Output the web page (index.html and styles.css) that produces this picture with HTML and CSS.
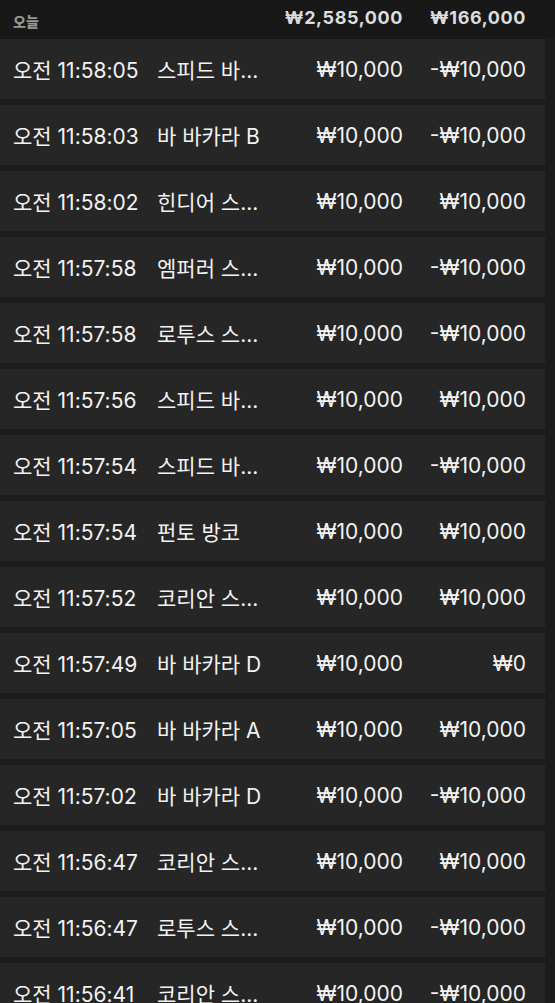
FILE: index.html
```html
<!DOCTYPE html>
<html>
<head>
  <meta charset="utf-8">
  <title>베팅 내역</title>
  <link rel="stylesheet" href="styles.css">
</head>
<body>
  <!-- 오늘 합계 -->
  <div class="summary">
    <span class="day">오늘</span>
    <span></span>
    <span class="total">₩2,585,000</span>
    <span class="total">₩166,000</span>
  </div>

  <!-- 내역 목록 -->
  <div class="list">
    <div class="row"><span>오전 11:58:05</span><span class="name">스피드 바...</span><span class="amt">₩10,000</span><span class="amt">-₩10,000</span></div>
    <div class="row"><span>오전 11:58:03</span><span class="name">바 바카라 B</span><span class="amt">₩10,000</span><span class="amt">-₩10,000</span></div>
    <div class="row"><span>오전 11:58:02</span><span class="name">힌디어 스...</span><span class="amt">₩10,000</span><span class="amt">₩10,000</span></div>
    <div class="row"><span>오전 11:57:58</span><span class="name">엠퍼러 스...</span><span class="amt">₩10,000</span><span class="amt">-₩10,000</span></div>
    <div class="row"><span>오전 11:57:58</span><span class="name">로투스 스...</span><span class="amt">₩10,000</span><span class="amt">-₩10,000</span></div>
    <div class="row"><span>오전 11:57:56</span><span class="name">스피드 바...</span><span class="amt">₩10,000</span><span class="amt">₩10,000</span></div>
    <div class="row"><span>오전 11:57:54</span><span class="name">스피드 바...</span><span class="amt">₩10,000</span><span class="amt">-₩10,000</span></div>
    <div class="row"><span>오전 11:57:54</span><span class="name">펀토 방코</span><span class="amt">₩10,000</span><span class="amt">₩10,000</span></div>
    <div class="row"><span>오전 11:57:52</span><span class="name">코리안 스...</span><span class="amt">₩10,000</span><span class="amt">₩10,000</span></div>
    <div class="row"><span>오전 11:57:49</span><span class="name">바 바카라 D</span><span class="amt">₩10,000</span><span class="amt">₩0</span></div>
    <div class="row"><span>오전 11:57:05</span><span class="name">바 바카라 A</span><span class="amt">₩10,000</span><span class="amt">₩10,000</span></div>
    <div class="row"><span>오전 11:57:02</span><span class="name">바 바카라 D</span><span class="amt">₩10,000</span><span class="amt">-₩10,000</span></div>
    <div class="row"><span>오전 11:56:47</span><span class="name">코리안 스...</span><span class="amt">₩10,000</span><span class="amt">₩10,000</span></div>
    <div class="row"><span>오전 11:56:47</span><span class="name">로투스 스...</span><span class="amt">₩10,000</span><span class="amt">-₩10,000</span></div>
    <div class="row"><span>오전 11:56:41</span><span class="name">코리안 스...</span><span class="amt">₩10,000</span><span class="amt">-₩10,000</span></div>
  </div>
</body>
</html>
```

FILE: styles.css
```css
/* 기본 */
body {
  margin: 0;
  background-color: #1c1c1c;
  color: #f2f2f2;
  font-family: Inter, "Noto Sans CJK KR", sans-serif;
  overflow: hidden;
}

/* 합계 줄 */
.summary {
  display: grid;
  grid-template-columns: 144px 110px 1fr 123px;
  align-items: center;
  height: 39px;
  padding: 0 29px 0 13px;
  background-color: #181818;
}

.day {
  font-size: 14px;
  font-weight: 900;
  color: #969696;
  padding-top: 3px;
}

.total {
  text-align: right;
  font-size: 18px;
  font-weight: bold;
  color: #dcdcdc;
  letter-spacing: 0.6px;
  padding-bottom: 5px;
}

/* 목록 */
.list {
  display: flex;
  flex-direction: column;
  gap: 6px;
  width: 545px;
}

.row {
  display: grid;
  grid-template-columns: 144px 110px 1fr 123px;
  align-items: center;
  height: 60px;
  padding: 0 19px 0 13px;
  background-color: #262626;
  font-size: 21px;
}

.name {
  white-space: nowrap;
}

.amt {
  text-align: right;
}
```
